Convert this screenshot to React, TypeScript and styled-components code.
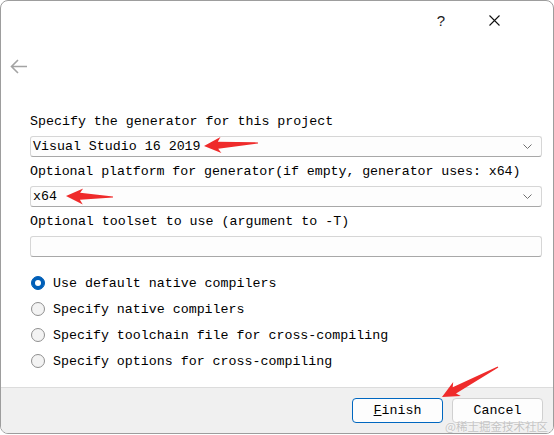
import React from "react";
import styled, { createGlobalStyle } from "styled-components";

const GlobalStyle = createGlobalStyle`
  html, body {
    margin: 0;
    padding: 0;
    background: #ffffff;
  }
  * {
    box-sizing: border-box;
  }
`;

const MONO = `"Liberation Mono", "Noto Sans CJK SC", monospace`;

const Window = styled.div`
  position: relative;
  width: 554px;
  height: 434px;
  border: 1px solid #9d9d9d;
  border-radius: 8px;
  background: #ffffff;
  display: flex;
  flex-direction: column;
  overflow: hidden;
  font-family: ${MONO};
  font-size: 13.3px;
  color: #000;
`;

const TitleBar = styled.div`
  height: 38px;
  display: flex;
  justify-content: flex-end;
  align-items: center;
  gap: 23px;
  padding-right: 44px;
`;

const TitleButton = styled.div`
  width: 30px;
  height: 30px;
  display: flex;
  align-items: center;
  justify-content: center;
  font-family: "Liberation Sans", sans-serif;
  font-size: 15px;
  color: #1a1a1a;
`;

const BackRow = styled.div`
  height: 54px;
  display: flex;
  align-items: center;
  padding-left: 9px;
`;

const Body = styled.div`
  flex: 1;
  padding: 21px 11px 0 29px;
  display: flex;
  flex-direction: column;
  gap: 7px;
`;

const Field = styled.div`
  display: flex;
  flex-direction: column;
  gap: 6px;
`;

const Label = styled.div<{ $tight?: boolean }>`
  line-height: 16px;
  height: 16px;
  white-space: nowrap;
  letter-spacing: ${(p) => (p.$tight ? "-0.07px" : "0")};
`;

const Box = styled.div`
  height: 21px;
  border: 1px solid #d6d6d6;
  border-bottom-color: #a8a8a8;
  border-radius: 3px;
  background: #fdfdfd;
  display: flex;
  align-items: center;
  justify-content: space-between;
  padding: 0 9px 0 2px;
  line-height: 16px;
`;

const RadioGroup = styled.div`
  margin-top: 6px;
  display: flex;
  flex-direction: column;
`;

const RadioRow = styled.div`
  height: 26px;
  display: flex;
  align-items: center;
  gap: 8px;
  padding-left: 1px;
`;

const RadioDot = styled.span<{ $checked?: boolean }>`
  width: 14px;
  height: 14px;
  border-radius: 50%;
  display: flex;
  align-items: center;
  justify-content: center;
  border: 1px solid ${(p) => (p.$checked ? "#005fb8" : "#8f8f8f")};
  background: ${(p) => (p.$checked ? "#005fb8" : "#f3f3f3")};
  &::after {
    content: "";
    display: ${(p) => (p.$checked ? "block" : "none")};
    width: 6px;
    height: 6px;
    border-radius: 50%;
    background: #ffffff;
  }
`;

const Footer = styled.div`
  height: 46px;
  border-top: 1px solid #dcdcdc;
  background: #f0f0f0;
  display: flex;
  justify-content: flex-end;
  align-items: flex-start;
  gap: 9px;
  padding: 10px 10px 0 0;
`;

const Button = styled.div<{ $primary?: boolean }>`
  width: 91px;
  height: 25px;
  border: 1px solid ${(p) => (p.$primary ? "#0067c0" : "#d0d0d0")};
  border-radius: 4px;
  background: #fdfdfd;
  display: flex;
  align-items: center;
  justify-content: center;
  line-height: 16px;
  padding-top: 1px;
`;

const Watermark = styled.div`
  position: absolute;
  right: 5px;
  bottom: 0px;
  font-family: "Noto Sans CJK SC", "Liberation Sans", sans-serif;
  font-size: 11.5px;
  line-height: 14px;
  color: #c4c4c4;
  text-shadow: 0 0 2px #ffffff;
  white-space: nowrap;
`;

const Overlay = styled.svg`
  position: absolute;
  left: -1px;
  top: -1px;
  width: 554px;
  height: 434px;
  pointer-events: none;
`;

const Chevron = () => (
  <svg width="9" height="5" viewBox="0 0 9 5">
    <polyline points="0.5,0.5 4.5,4.5 8.5,0.5" fill="none" stroke="#707070" strokeWidth="1" />
  </svg>
);

type Pt = [number, number];

const arrowPoints = (tip: Pt, tail: Pt) => {
  const dx = tail[0] - tip[0];
  const dy = tail[1] - tip[1];
  const len = Math.hypot(dx, dy);
  const ux = dx / len;
  const uy = dy / len;
  const nx = -uy;
  const ny = ux;
  const at = (d: number, w: number): string =>
    `${(tip[0] + ux * d + nx * w).toFixed(1)},${(tip[1] + uy * d + ny * w).toFixed(1)}`;
  const head = 17;
  return [
    at(0, 0),
    at(head, 8),
    at(head - 3, 3.5),
    at(len, 0.6),
    at(len, -0.6),
    at(head - 3, -3.5),
    at(head, -8),
  ].join(" ");
};

const arrows: [Pt, Pt][] = [
  [[204, 146], [258, 143]],
  [[66, 196], [113, 197]],
  [[442, 397], [498, 367]],
];

const radios = [
  "Use default native compilers",
  "Specify native compilers",
  "Specify toolchain file for cross-compiling",
  "Specify options for cross-compiling",
];

const App = () => {
  return (
    <>
      <GlobalStyle />
      <Window>
        <TitleBar>
          <TitleButton>?</TitleButton>
          <TitleButton>
            <svg width="11" height="11" viewBox="0 0 11 11">
              <path d="M0.5 0.5 L10.5 10.5 M10.5 0.5 L0.5 10.5" stroke="#111" strokeWidth="1.1" />
            </svg>
          </TitleButton>
        </TitleBar>
        <BackRow>
          <svg width="18" height="15" viewBox="0 0 18 15">
            <path d="M17 7.5 H1.5 M8 1 L1.5 7.5 L8 14" fill="none" stroke="#a3a3a3" strokeWidth="1.6" />
          </svg>
        </BackRow>
        <Body>
          <Field>
            <Label>Specify the generator for this project</Label>
            <Box>
              <span>Visual Studio 16 2019</span>
              <Chevron />
            </Box>
          </Field>
          <Field>
            <Label $tight>Optional platform for generator(if empty, generator uses: x64)</Label>
            <Box>
              <span>x64</span>
              <Chevron />
            </Box>
          </Field>
          <Field>
            <Label>Optional toolset to use (argument to -T)</Label>
            <Box />
          </Field>
          <RadioGroup>
            {radios.map((r, i) => (
              <RadioRow key={r}>
                <RadioDot $checked={i === 0} />
                <span>{r}</span>
              </RadioRow>
            ))}
          </RadioGroup>
        </Body>
        <Footer>
          <Button $primary>
            <span>
              <u>F</u>inish
            </span>
          </Button>
          <Button>Cancel</Button>
        </Footer>
        <Watermark>@稀土掘金技术社区</Watermark>
        <Overlay viewBox="0 0 554 434">
          {arrows.map(([tip, tail], i) => (
            <polygon key={i} points={arrowPoints(tip, tail)} fill="#ef2b2b" />
          ))}
        </Overlay>
      </Window>
    </>
  );
};

export default App;
